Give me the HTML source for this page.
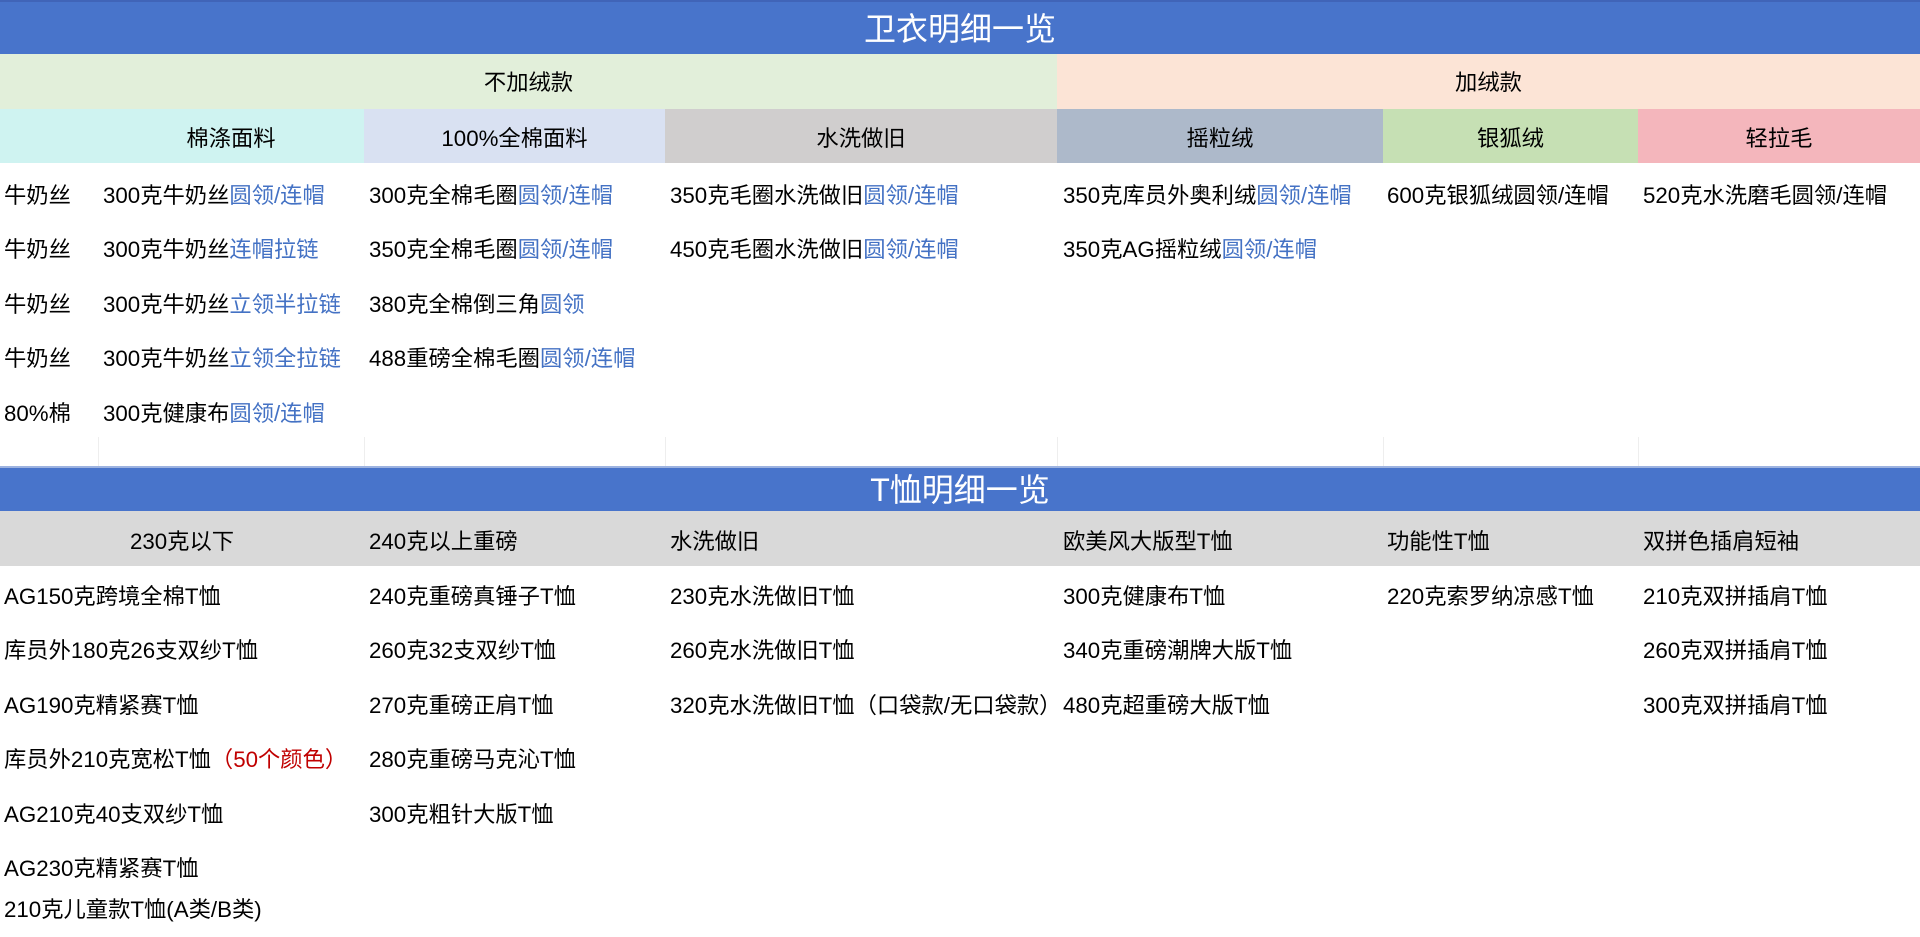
<!DOCTYPE html>
<html><head><meta charset="utf-8"><style>
*{margin:0;padding:0;box-sizing:border-box}
body{width:1920px;height:922px;overflow:hidden;background:#fff;font-family:"Liberation Sans","Noto Sans CJK SC",sans-serif;font-size:22.3px;color:#000;position:relative}
.a{position:absolute}
.t{position:absolute;white-space:nowrap;line-height:54px;height:54px}
.c{text-align:center}
.b{color:#4472C4}
.r{color:#C00000}
.bar{background:#4874CB;color:#fff;font-size:32px;text-align:center}
.vl{position:absolute;top:437px;height:29px;width:1px;background:#eee}
</style></head><body>
<div class="a bar" style="left:0;top:0;width:1920px;height:54px;line-height:54px;border-top:2px solid #4064b8">卫衣明细一览</div>
<div class="a c" style="left:0;top:54px;width:1057px;height:55px;line-height:58px;background:#E2EFDA">不加绒款</div>
<div class="a c" style="left:1057px;top:54px;width:863px;height:55px;line-height:58px;background:#FCE4D6">加绒款</div>
<div class="a" style="left:0;top:109px;width:364px;height:54px;background:#CFF3F1"></div>
<div class="a" style="left:364px;top:109px;width:301px;height:54px;background:#D9E1F2"></div>
<div class="a" style="left:665px;top:109px;width:392px;height:54px;background:#D0CECE"></div>
<div class="a" style="left:1057px;top:109px;width:326px;height:54px;background:#ADB9CA"></div>
<div class="a" style="left:1383px;top:109px;width:255px;height:54px;background:#C6E0B4"></div>
<div class="a" style="left:1638px;top:109px;width:282px;height:54px;background:#F4B6BC"></div>
<div class="t c" style="left:98px;top:112px;width:266px">棉涤面料</div>
<div class="t c" style="left:364px;top:112px;width:301px">100%全棉面料</div>
<div class="t c" style="left:665px;top:112px;width:392px">水洗做旧</div>
<div class="t c" style="left:1057px;top:112px;width:326px">摇粒绒</div>
<div class="t c" style="left:1383px;top:112px;width:255px">银狐绒</div>
<div class="t c" style="left:1638px;top:112px;width:282px">轻拉毛</div>

<div class="t" style="left:4px;top:169px">牛奶丝</div>
<div class="t" style="left:4px;top:223px">牛奶丝</div>
<div class="t" style="left:4px;top:278px">牛奶丝</div>
<div class="t" style="left:4px;top:332px">牛奶丝</div>
<div class="t" style="left:4px;top:387px">80%棉</div>

<div class="t" style="left:103px;top:169px">300克牛奶丝<span class="b">圆领/连帽</span></div>
<div class="t" style="left:103px;top:223px">300克牛奶丝<span class="b">连帽拉链</span></div>
<div class="t" style="left:103px;top:278px">300克牛奶丝<span class="b">立领半拉链</span></div>
<div class="t" style="left:103px;top:332px">300克牛奶丝<span class="b">立领全拉链</span></div>
<div class="t" style="left:103px;top:387px">300克健康布<span class="b">圆领/连帽</span></div>

<div class="t" style="left:369px;top:169px">300克全棉毛圈<span class="b">圆领/连帽</span></div>
<div class="t" style="left:369px;top:223px">350克全棉毛圈<span class="b">圆领/连帽</span></div>
<div class="t" style="left:369px;top:278px">380克全棉倒三角<span class="b">圆领</span></div>
<div class="t" style="left:369px;top:332px">488重磅全棉毛圈<span class="b">圆领/连帽</span></div>

<div class="t" style="left:670px;top:169px">350克毛圈水洗做旧<span class="b">圆领/连帽</span></div>
<div class="t" style="left:670px;top:223px">450克毛圈水洗做旧<span class="b">圆领/连帽</span></div>

<div class="t" style="left:1063px;top:169px">350克库员外奥利绒<span class="b">圆领/连帽</span></div>
<div class="t" style="left:1063px;top:223px">350克AG摇粒绒<span class="b">圆领/连帽</span></div>
<div class="t" style="left:1387px;top:169px">600克银狐绒圆领/连帽</div>
<div class="t" style="left:1643px;top:169px">520克水洗磨毛圆领/连帽</div>

<div class="vl" style="left:98px"></div><div class="vl" style="left:364px"></div><div class="vl" style="left:665px"></div><div class="vl" style="left:1057px"></div><div class="vl" style="left:1383px"></div><div class="vl" style="left:1638px"></div>

<div class="a bar" style="left:0;top:466px;width:1920px;height:45px;line-height:45px;border-top:2px solid #9db3e0">T恤明细一览</div>
<div class="a" style="left:0;top:511px;width:1920px;height:55px;background:#D9D9D9"></div>
<div class="t c" style="left:0;top:515px;width:364px">230克以下</div>
<div class="t" style="left:369px;top:515px">240克以上重磅</div>
<div class="t" style="left:670px;top:515px">水洗做旧</div>
<div class="t" style="left:1063px;top:515px">欧美风大版型T恤</div>
<div class="t" style="left:1387px;top:515px">功能性T恤</div>
<div class="t" style="left:1643px;top:515px">双拼色插肩短袖</div>

<div class="t" style="left:4px;top:570px">AG150克跨境全棉T恤</div>
<div class="t" style="left:4px;top:624px">库员外180克26支双纱T恤</div>
<div class="t" style="left:4px;top:679px">AG190克精紧赛T恤</div>
<div class="t" style="left:4px;top:733px">库员外210克宽松T恤<span class="r">（50个颜色）</span></div>
<div class="t" style="left:4px;top:788px">AG210克40支双纱T恤</div>
<div class="t" style="left:4px;top:842px">AG230克精紧赛T恤</div>
<div class="t" style="left:4px;top:883px">210克儿童款T恤(A类/B类)</div>

<div class="t" style="left:369px;top:570px">240克重磅真锤子T恤</div>
<div class="t" style="left:369px;top:624px">260克32支双纱T恤</div>
<div class="t" style="left:369px;top:679px">270克重磅正肩T恤</div>
<div class="t" style="left:369px;top:733px">280克重磅马克沁T恤</div>
<div class="t" style="left:369px;top:788px">300克粗针大版T恤</div>

<div class="t" style="left:670px;top:570px">230克水洗做旧T恤</div>
<div class="t" style="left:670px;top:624px">260克水洗做旧T恤</div>
<div class="t" style="left:670px;top:679px">320克水洗做旧T恤（口袋款/无口袋款）</div>

<div class="t" style="left:1063px;top:570px">300克健康布T恤</div>
<div class="t" style="left:1063px;top:624px">340克重磅潮牌大版T恤</div>
<div class="t" style="left:1063px;top:679px">480克超重磅大版T恤</div>

<div class="t" style="left:1387px;top:570px">220克索罗纳凉感T恤</div>

<div class="t" style="left:1643px;top:570px">210克双拼插肩T恤</div>
<div class="t" style="left:1643px;top:624px">260克双拼插肩T恤</div>
<div class="t" style="left:1643px;top:679px">300克双拼插肩T恤</div>
</body></html>
